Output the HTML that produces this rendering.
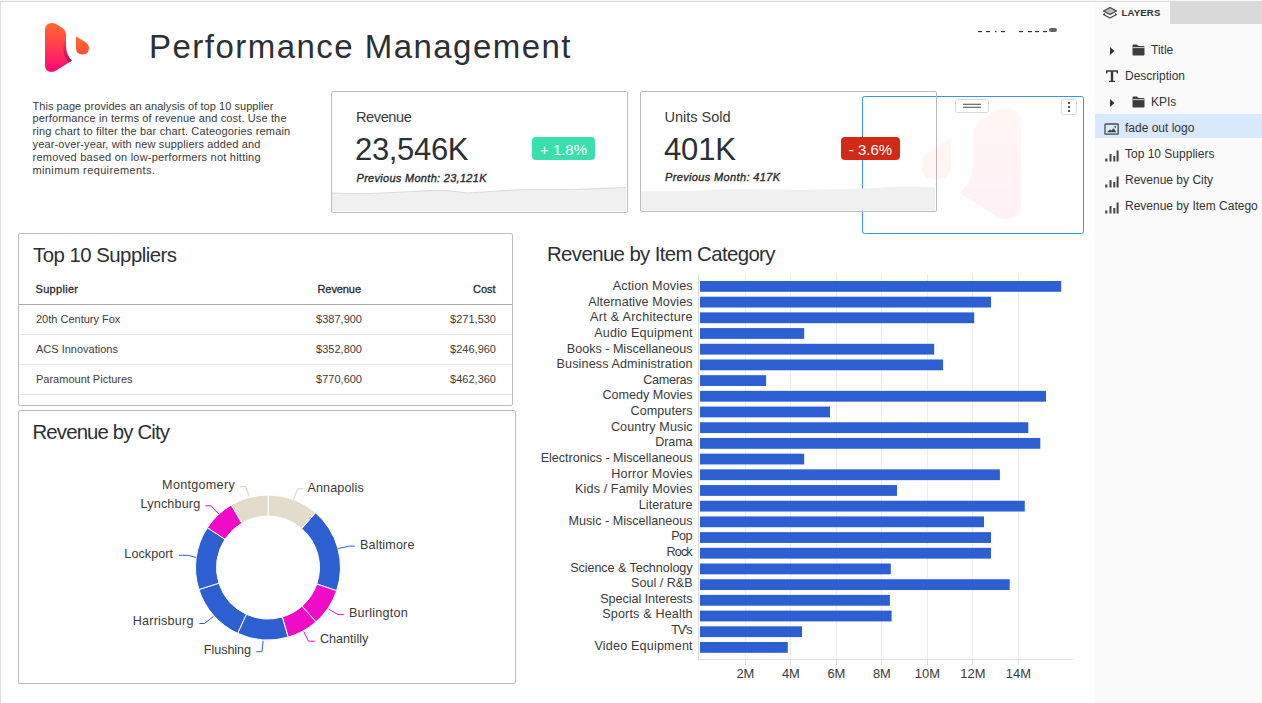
<!DOCTYPE html>
<html>
<head>
<meta charset="utf-8">
<style>
html,body{margin:0;padding:0;}
body{width:1262px;height:703px;overflow:hidden;background:#fff;position:relative;font-family:"Liberation Sans",sans-serif;color:#333;}
#topline{position:absolute;left:0;top:0;width:1262px;height:1px;background:#f7f7f7;}
#topline2{position:absolute;left:0;top:1px;width:1262px;height:1px;background:#dadada;}
#leftline{position:absolute;left:0;top:1px;width:1px;height:702px;background:#dedede;}
.card{position:absolute;box-sizing:border-box;border:1px solid #bdbdbd;border-radius:2px;}
#panel{position:absolute;left:1095px;top:2px;width:167px;height:701px;background:#fafafa;overflow:hidden;}
#tabgray{position:absolute;left:75px;top:0;width:92px;height:22px;background:#dadada;}
#tabtop{position:absolute;left:75px;top:-1px;width:92px;height:1px;background:#c6c6c6;}
#tabtxt{position:absolute;left:26.5px;top:4.8px;font-size:9.6px;font-weight:bold;color:#333;letter-spacing:0.15px;}
.row{position:absolute;left:0;width:167px;height:24px;}
#panelbg{position:absolute;left:1095px;top:2px;width:167px;height:701px;background:#fafafa;}
.row .t{position:absolute;left:30px;top:5px;font-size:12px;color:#333;white-space:nowrap;}
.row .t.clip{width:133px;overflow:hidden;}
.row.sel{background:#d8e8fd;}
svg{position:absolute;left:0;top:0;overflow:visible;}
</style>
</head>
<body>
<div id="topline"></div><div id="topline2"></div><div id="leftline"></div>

<svg width="1095" height="703" style="position:absolute;left:0;top:0;"><rect x="862.5" y="96.5" width="221" height="137" rx="2" fill="none" stroke="#3b93ec" stroke-width="1"/></svg>
<!-- KPI cards -->
<div class="card" style="left:331px;top:91px;width:297px;height:122px;"></div>
<div class="card" style="left:640px;top:91px;width:297px;height:121px;"></div>
<!-- table card -->
<div class="card" style="left:18px;top:233px;width:495px;height:173px;"></div>
<!-- city card -->
<div class="card" style="left:18px;top:410px;width:498px;height:274px;"></div>

<svg width="1095" height="703" viewBox="0 0 1095 703" style="font-family:'Liberation Sans',sans-serif;">
  <defs>
    <linearGradient id="lg1" x1="0" y1="0" x2="0" y2="1">
      <stop offset="0" stop-color="#ff6b2c"/>
      <stop offset="1" stop-color="#ff0679"/>
    </linearGradient>
    <linearGradient id="lg3" x1="0" y1="0" x2="0" y2="1">
      <stop offset="0" stop-color="#b3154e" stop-opacity="0"/>
      <stop offset="0.5" stop-color="#b3154e" stop-opacity="0.55"/>
      <stop offset="1" stop-color="#a8124a" stop-opacity="0.85"/>
    </linearGradient>
    <linearGradient id="lg2" x1="0" y1="0" x2="0" y2="1">
      <stop offset="0" stop-color="#ff6a2c"/>
      <stop offset="1" stop-color="#ff4d3e"/>
    </linearGradient>
  </defs>
  <!-- logo -->
  <g id="logo">
    <path d="M45,30 Q45,23 52,23 Q54.5,23 57,24.5 L62.5,28 Q66,30.5 66,35 L66,46 Q66,55.5 72,60.5 L57,70 Q54,72 51.5,72 Q45,72 45,65 Z" fill="url(#lg1)"/>
    <path d="M66,38 L66,46 Q66,55.5 72,60.5 L69,62.4 Q63.6,57.5 63.4,49 Q63.4,43 66,38 Z" fill="url(#lg3)"/>
    <path d="M76,36.5 L84.5,41.5 Q89,44.2 89,48 Q89,54.5 82.5,54.5 Q76,54.5 76,48 Z" fill="url(#lg2)"/>
  </g>
  <!-- title -->
  <text x="149" y="58" font-size="33" fill="#2c2f34" textLength="421.5" lengthAdjust="spacing">Performance Management</text>
  <!-- clipped date text remnants -->
  <g fill="#333">
    <rect x="978" y="31" width="4" height="1.2"/><rect x="986" y="31" width="4" height="1.2"/><rect x="995" y="31" width="1.5" height="1.2"/><rect x="1001" y="31" width="4" height="1.2"/>
    <rect x="1019" y="31" width="4" height="1.2"/><rect x="1028" y="31" width="4" height="1.2"/><rect x="1035" y="31" width="4" height="1.2"/><rect x="1043" y="31" width="4" height="1.2"/>
    <rect x="1049" y="28" width="8" height="4" rx="2" fill="#666"/>
  </g>
  <!-- description -->
  <g font-size="11" fill="#3a3a3a" lengthAdjust="spacing">
    <text x="32.5" y="109.5" textLength="240.8">This page provides an analysis of top 10 supplier</text>
    <text x="32.5" y="122.3" textLength="254">performance in terms of revenue and cost. Use the</text>
    <text x="32.5" y="135.1" textLength="257.7">ring chart to filter the bar chart. Cateogories remain</text>
    <text x="32.5" y="147.9" textLength="227.9">year-over-year, with new suppliers added and</text>
    <text x="32.5" y="160.7" textLength="228.1">removed based on low-performers not hitting</text>
    <text x="32.5" y="173.5" textLength="122.3">minimum requirements.</text>
  </g>

  <!-- KPI revenue -->
  <text x="356" y="122" font-size="14.6" fill="#383838" textLength="55.8">Revenue</text>
  <text x="355" y="160" font-size="31" fill="#2c2f34" textLength="113.5">23,546K</text>
  <rect x="532" y="137" width="63" height="23" rx="4" fill="#3adfae"/>
  <text x="540" y="155" font-size="15" fill="#fff" textLength="47">+ 1.8%</text>
  <text x="356.5" y="182" font-size="11" font-style="italic" fill="#2a2a2a" stroke="#2a2a2a" stroke-width="0.35" textLength="130">Previous Month: 23,121K</text>
  <path d="M332,193 C345,193.5 355,193.8 366,193.6 C390,193 410,191.5 435,190.3 C445,190 455,191.5 467,193 C480,192.5 500,190.5 520,189.8 C540,189.4 560,189.6 575,189.4 C595,188.8 610,188 626,187.6 L626,211 L332,211 Z" fill="#f0f0f0"/>
  <path d="M332,193 C345,193.5 355,193.8 366,193.6 C390,193 410,191.5 435,190.3 C445,190 455,191.5 467,193 C480,192.5 500,190.5 520,189.8 C540,189.4 560,189.6 575,189.4 C595,188.8 610,188 626,187.6" fill="none" stroke="#dadada" stroke-width="1"/>

  <!-- KPI units -->
  <text x="664.5" y="122" font-size="14.6" fill="#383838" textLength="66">Units Sold</text>
  <text x="664" y="160" font-size="31" fill="#2c2f34" textLength="72">401K</text>
  <rect x="841" y="137" width="59" height="23" rx="4" fill="#d02a17"/>
  <text x="870.5" y="155" font-size="15" fill="#fff" text-anchor="middle">- 3.6%</text>
  <text x="665" y="181" font-size="11" font-style="italic" fill="#2a2a2a" stroke="#2a2a2a" stroke-width="0.35" textLength="115">Previous Month: 417K</text>
  <path d="M641,191.4 C660,191.3 680,191 697,190.7 C710,190 720,189.3 733,189 C760,189.5 785,190 804,190 C830,189.5 850,189 864,188.6 C880,187.8 890,187 899.5,186.8 C915,186.8 925,187 935,187.1 L935,210.5 L641,210.5 Z" fill="#f0f0f0"/>


  <!-- Table -->
  <text x="33" y="262" font-size="20.4" fill="#2c2f34" textLength="144">Top 10 Suppliers</text>
  <g font-size="11" fill="#2a2a2a" stroke="#2a2a2a" stroke-width="0.3">
    <text x="35.5" y="293" textLength="42.5">Supplier</text>
    <text x="317.5" y="293" textLength="43.5">Revenue</text>
    <text x="473" y="293" textLength="22.5">Cost</text>
  </g>
  <rect x="19" y="304" width="493" height="1" fill="#aaaaaa"/>
  <g font-size="11" fill="#3c3c3c">
    <text x="36" y="322.5">20th Century Fox</text>
    <text x="362" y="322.5" text-anchor="end">$387,900</text>
    <text x="496" y="322.5" text-anchor="end">$271,530</text>
    <text x="36" y="352.5">ACS Innovations</text>
    <text x="362" y="352.5" text-anchor="end">$352,800</text>
    <text x="496" y="352.5" text-anchor="end">$246,960</text>
    <text x="36" y="382.5">Paramount Pictures</text>
    <text x="362" y="382.5" text-anchor="end">$770,600</text>
    <text x="496" y="382.5" text-anchor="end">$462,360</text>
  </g>
  <rect x="20" y="334" width="492" height="1" fill="#e6e6e6"/>
  <rect x="20" y="364" width="492" height="1" fill="#e6e6e6"/>
  <rect x="20" y="394" width="492" height="1" fill="#e6e6e6"/>

  <!-- City -->
  <text x="32.5" y="439" font-size="20.4" fill="#2c2f34" textLength="137.5">Revenue by City</text>
  <g id="donut" stroke="#fff" stroke-width="1">
<path d="M268.00,495.00 A72.5,72.5 0 0 1 315.56,512.78 L301.79,528.63 A51.5,51.5 0 0 0 268.00,516.00 Z" fill="#e3dccc"/>
<path d="M315.56,512.78 A72.5,72.5 0 0 1 336.67,590.74 L316.78,584.01 A51.5,51.5 0 0 0 301.79,528.63 Z" fill="#2d5fd2"/>
<path d="M336.67,590.74 A72.5,72.5 0 0 1 315.95,621.88 L302.06,606.13 A51.5,51.5 0 0 0 316.78,584.01 Z" fill="#ef0bc8"/>
<path d="M315.95,621.88 A72.5,72.5 0 0 1 288.11,637.16 L282.28,616.98 A51.5,51.5 0 0 0 302.06,606.13 Z" fill="#ef0bc8"/>
<path d="M288.11,637.16 A72.5,72.5 0 0 1 237.59,633.31 L246.40,614.25 A51.5,51.5 0 0 0 282.28,616.98 Z" fill="#2d5fd2"/>
<path d="M237.59,633.31 A72.5,72.5 0 0 1 198.93,589.54 L218.94,583.16 A51.5,51.5 0 0 0 246.40,614.25 Z" fill="#2d5fd2"/>
<path d="M198.93,589.54 A72.5,72.5 0 0 1 207.40,527.70 L224.96,539.23 A51.5,51.5 0 0 0 218.94,583.16 Z" fill="#2d5fd2"/>
<path d="M207.40,527.70 A72.5,72.5 0 0 1 231.31,504.97 L241.94,523.08 A51.5,51.5 0 0 0 224.96,539.23 Z" fill="#ef0bc8"/>
<path d="M231.31,504.97 A72.5,72.5 0 0 1 268.00,495.00 L268.00,516.00 A51.5,51.5 0 0 0 241.94,523.08 Z" fill="#e3dccc"/>
</g>
  <g fill="none" stroke-width="1">
    <polyline points="240.2,486.4 245.2,486.4 249.4,496.3" stroke="#d6cfbd"/>
    <polyline points="205.3,505.8 211,505.8 218.9,514.1" stroke="#ef0bc8"/>
    <polyline points="179,555.3 188.3,555.3 196.1,557.5" stroke="#2d5fd2"/>
    <polyline points="303.4,488.8 297.7,488.8 293.5,499.2" stroke="#d6cfbd"/>
    <polyline points="354.9,546.1 349.7,546.1 338.3,548.5" stroke="#2d5fd2"/>
    <polyline points="199.4,623.5 204.5,623.5 213.4,616.5" stroke="#2d5fd2"/>
    <polyline points="256.3,651.7 262,651.7 263.1,640.8" stroke="#2d5fd2"/>
    <polyline points="343.9,614.6 337.8,614.6 328.9,609.2" stroke="#ef0bc8"/>
    <polyline points="314.8,641.2 308.4,641.2 303.9,631.8" stroke="#ef0bc8"/>
  </g>
  <g font-size="12.6" fill="#3a3a3a">
    <text x="162.1" y="488.9" textLength="72.6">Montgomery</text>
    <text x="140.6" y="508.2" textLength="59.6">Lynchburg</text>
    <text x="124.3" y="557.5" textLength="48.8">Lockport</text>
    <text x="307.4" y="491.6" textLength="56.3">Annapolis</text>
    <text x="359.9" y="548.5" textLength="54.6">Baltimore</text>
    <text x="132.7" y="625.4" textLength="60.8">Harrisburg</text>
    <text x="203.8" y="653.6" textLength="47.3">Flushing</text>
    <text x="348.9" y="616.9" textLength="58.8">Burlington</text>
    <text x="319.9" y="643.4" textLength="48.5">Chantilly</text>
  </g>

  <!-- Bar chart -->
  <text x="547" y="261" font-size="20.4" fill="#2c2f34" textLength="228.5">Revenue by Item Category</text>
  <g id="bars">
<line x1="745.5" y1="274" x2="745.5" y2="659" stroke="#eeeeee" stroke-width="1"/>
<line x1="790.5" y1="274" x2="790.5" y2="659" stroke="#eeeeee" stroke-width="1"/>
<line x1="836.5" y1="274" x2="836.5" y2="659" stroke="#eeeeee" stroke-width="1"/>
<line x1="881.5" y1="274" x2="881.5" y2="659" stroke="#eeeeee" stroke-width="1"/>
<line x1="927.5" y1="274" x2="927.5" y2="659" stroke="#eeeeee" stroke-width="1"/>
<line x1="972.5" y1="274" x2="972.5" y2="659" stroke="#eeeeee" stroke-width="1"/>
<line x1="1018.5" y1="274" x2="1018.5" y2="659" stroke="#eeeeee" stroke-width="1"/>
<line x1="698.5" y1="274" x2="698.5" y2="659.5" stroke="#dddddd" stroke-width="1"/>
<line x1="698" y1="659.5" x2="1073" y2="659.5" stroke="#dddddd" stroke-width="1"/>
<line x1="745.5" y1="659" x2="745.5" y2="665" stroke="#dddddd" stroke-width="1"/>
<line x1="790.5" y1="659" x2="790.5" y2="665" stroke="#dddddd" stroke-width="1"/>
<line x1="836.5" y1="659" x2="836.5" y2="665" stroke="#dddddd" stroke-width="1"/>
<line x1="881.5" y1="659" x2="881.5" y2="665" stroke="#dddddd" stroke-width="1"/>
<line x1="927.5" y1="659" x2="927.5" y2="665" stroke="#dddddd" stroke-width="1"/>
<line x1="972.5" y1="659" x2="972.5" y2="665" stroke="#dddddd" stroke-width="1"/>
<line x1="1018.5" y1="659" x2="1018.5" y2="665" stroke="#dddddd" stroke-width="1"/>
<rect x="700" y="281.00" width="361.2" height="10.8" fill="#2d5fd2"/>
<rect x="700" y="296.70" width="291.0" height="10.8" fill="#2d5fd2"/>
<rect x="700" y="312.39" width="274.2" height="10.8" fill="#2d5fd2"/>
<rect x="700" y="328.09" width="104.2" height="10.8" fill="#2d5fd2"/>
<rect x="700" y="343.78" width="234.2" height="10.8" fill="#2d5fd2"/>
<rect x="700" y="359.48" width="243.1" height="10.8" fill="#2d5fd2"/>
<rect x="700" y="375.18" width="66.1" height="10.8" fill="#2d5fd2"/>
<rect x="700" y="390.87" width="346.0" height="10.8" fill="#2d5fd2"/>
<rect x="700" y="406.57" width="130.0" height="10.8" fill="#2d5fd2"/>
<rect x="700" y="422.26" width="328.3" height="10.8" fill="#2d5fd2"/>
<rect x="700" y="437.96" width="340.3" height="10.8" fill="#2d5fd2"/>
<rect x="700" y="453.66" width="104.2" height="10.8" fill="#2d5fd2"/>
<rect x="700" y="469.35" width="299.9" height="10.8" fill="#2d5fd2"/>
<rect x="700" y="485.05" width="197.0" height="10.8" fill="#2d5fd2"/>
<rect x="700" y="500.74" width="324.8" height="10.8" fill="#2d5fd2"/>
<rect x="700" y="516.44" width="284.0" height="10.8" fill="#2d5fd2"/>
<rect x="700" y="532.14" width="291.0" height="10.8" fill="#2d5fd2"/>
<rect x="700" y="547.83" width="291.0" height="10.8" fill="#2d5fd2"/>
<rect x="700" y="563.53" width="190.8" height="10.8" fill="#2d5fd2"/>
<rect x="700" y="579.22" width="309.7" height="10.8" fill="#2d5fd2"/>
<rect x="700" y="594.92" width="189.9" height="10.8" fill="#2d5fd2"/>
<rect x="700" y="610.62" width="191.6" height="10.8" fill="#2d5fd2"/>
<rect x="700" y="626.31" width="102.0" height="10.8" fill="#2d5fd2"/>
<rect x="700" y="642.01" width="87.8" height="10.8" fill="#2d5fd2"/>
<g font-size="12.6" fill="#3a3a3a">
<text x="612.70" y="290.00" textLength="79.90">Action Movies</text>
<text x="588.20" y="305.64" textLength="104.40">Alternative Movies</text>
<text x="590.10" y="321.28" textLength="102.50">Art &amp; Architecture</text>
<text x="594.20" y="336.92" textLength="98.40">Audio Equipment</text>
<text x="566.80" y="352.56" textLength="125.80">Books - Miscellaneous</text>
<text x="556.60" y="368.20" textLength="136.00">Business Administration</text>
<text x="643.30" y="383.84" textLength="49.30">Cameras</text>
<text x="602.40" y="399.48" textLength="90.20">Comedy Movies</text>
<text x="630.50" y="415.12" textLength="62.10">Computers</text>
<text x="610.90" y="430.76" textLength="81.70">Country Music</text>
<text x="655.20" y="446.40" textLength="37.40">Drama</text>
<text x="540.70" y="462.04" textLength="151.90">Electronics - Miscellaneous</text>
<text x="611.20" y="477.68" textLength="81.40">Horror Movies</text>
<text x="575.10" y="493.32" textLength="117.50">Kids / Family Movies</text>
<text x="638.70" y="508.96" textLength="53.90">Literature</text>
<text x="568.50" y="524.60" textLength="124.10">Music - Miscellaneous</text>
<text x="671.20" y="540.24" textLength="21.40">Pop</text>
<text x="666.60" y="555.88" textLength="26.00">Rock</text>
<text x="570.20" y="571.52" textLength="122.40">Science &amp; Technology</text>
<text x="631.00" y="587.16" textLength="61.60">Soul / R&amp;B</text>
<text x="600.20" y="602.80" textLength="92.40">Special Interests</text>
<text x="602.20" y="618.44" textLength="90.40">Sports &amp; Health</text>
<text x="671.20" y="634.08" textLength="21.40">TV's</text>
<text x="594.50" y="649.72" textLength="98.10">Video Equipment</text>
</g>
<g font-size="12.9" fill="#3a3a3a" text-anchor="middle">
<text x="745.4" y="678">2M</text>
<text x="790.9" y="678">4M</text>
<text x="836.4" y="678">6M</text>
<text x="881.9" y="678">8M</text>
<text x="927.4" y="678">10M</text>
<text x="972.9" y="678">12M</text>
<text x="1018.4" y="678">14M</text>
</g></g>

  <!-- selection box -->
  <rect x="955.5" y="99.5" width="33" height="13" rx="2" fill="#fff" stroke="#d8d8d8" stroke-width="1"/>
  <rect x="963" y="103.7" width="18" height="1.2" fill="#666"/>
  <rect x="963" y="106.7" width="18" height="1.2" fill="#666"/>
  <rect x="1061.5" y="99.5" width="15" height="15" rx="2" fill="#fff" stroke="#d8d8d8" stroke-width="1"/>
  <rect x="1068" y="102" width="2" height="2" fill="#555"/>
  <rect x="1068" y="106" width="2" height="2" fill="#555"/>
  <rect x="1068" y="110" width="2" height="2" fill="#555"/>

  <!-- faded logo -->
  <g opacity="0.05" transform="matrix(-2.265,0,0,2.265,1122.9,55.9)">
    <path d="M45,30 Q45,23 52,23 Q54.5,23 57,24.5 L62.5,28 Q66,30.5 66,35 L66,46 Q66,55.5 72,60.5 L57,70 Q54,72 51.5,72 Q45,72 45,65 Z" fill="url(#lg1)"/>
    <path d="M76,36.5 L84.5,41.5 Q89,44.2 89,48 Q89,54.5 82.5,54.5 Q76,54.5 76,48 Z" fill="url(#lg2)"/>
  </g>
</svg>

<!-- right panel -->
<div id="panelbg"></div>
<div id="panel">
  <div id="tabgray"></div><div id="tabtop"></div>
  <svg width="16" height="14" style="left:7px;top:4px;" viewBox="0 0 16 14">
    <path d="M8,1.5 L14.5,5 L8,8.5 L1.5,5 Z" fill="#bdbdbd" stroke="#444" stroke-width="1.2" stroke-linejoin="round"/>
    <path d="M3,7.5 L1.5,8.5 L8,12 L14.5,8.5 L13,7.5" fill="none" stroke="#444" stroke-width="1.2" stroke-linejoin="round"/>
  </svg>
  <div id="tabtxt">LAYERS</div>

  <div class="row" style="top:36px;">
    <svg width="8" height="10" style="left:14px;top:8px;" viewBox="0 0 8 10"><path d="M1,1 L5.5,5 L1,9 Z" fill="#333"/></svg>
    <svg width="14" height="12" style="left:37px;top:6px;" viewBox="0 0 14 12"><path d="M0.5,1.5 Q0.5,0.5 1.5,0.5 L5,0.5 L6.5,2 L11.5,2 Q12.5,2 12.5,3 L12.5,10.5 Q12.5,11.5 11.5,11.5 L1.5,11.5 Q0.5,11.5 0.5,10.5 Z" fill="#3c3c3c"/><path d="M0.5,3.6 L12.5,3.6" stroke="#fafafa" stroke-width="0.8"/></svg>
    <div class="t" style="left:56px;">Title</div>
  </div>
  <div class="row" style="top:62px;">
    <svg width="14" height="14" style="left:10px;top:5px;" viewBox="0 0 14 14"><path d="M1,1.2 L13,1.2 L13,4.4 L11.8,4.4 L11.3,2.8 L8.2,2.8 L8.2,11.4 L10,11.9 L10,13 L4,13 L4,11.9 L5.8,11.4 L5.8,2.8 L2.7,2.8 L2.2,4.4 L1,4.4 Z" fill="#3a3a3a"/></svg>
    <div class="t">Description</div>
  </div>
  <div class="row" style="top:88px;">
    <svg width="8" height="10" style="left:14px;top:8px;" viewBox="0 0 8 10"><path d="M1,1 L5.5,5 L1,9 Z" fill="#333"/></svg>
    <svg width="14" height="12" style="left:37px;top:6px;" viewBox="0 0 14 12"><path d="M0.5,1.5 Q0.5,0.5 1.5,0.5 L5,0.5 L6.5,2 L11.5,2 Q12.5,2 12.5,3 L12.5,10.5 Q12.5,11.5 11.5,11.5 L1.5,11.5 Q0.5,11.5 0.5,10.5 Z" fill="#3c3c3c"/><path d="M0.5,3.6 L12.5,3.6" stroke="#fafafa" stroke-width="0.8"/></svg>
    <div class="t" style="left:56px;">KPIs</div>
  </div>
  <div class="row sel" style="top:112px;">
    <svg width="16" height="13" style="left:9px;top:8.5px;" viewBox="0 0 16 13"><rect x="1" y="1" width="13.2" height="10.2" rx="0.6" fill="none" stroke="#4a4a4a" stroke-width="1.3"/><path d="M3,9.2 L6,6.4 L7.4,7.6 L9.6,5.2 L12.4,9.2 Z" fill="#444"/><circle cx="11.2" cy="3.8" r="0.9" fill="#444"/></svg>
    <div class="t" style="top:7px;">fade out logo</div>
  </div>
  <div class="row" style="top:140px;">
    <svg width="16" height="13" style="left:9px;top:8px;" viewBox="0 0 16 13"><rect x="1.2" y="8.5" width="2.2" height="3" fill="#444"/><rect x="5.5" y="4" width="2" height="7.5" fill="#444"/><rect x="9.3" y="6" width="2" height="5.5" fill="#444"/><rect x="12.6" y="0.5" width="2" height="11" fill="#444"/></svg>
    <div class="t">Top 10 Suppliers</div>
  </div>
  <div class="row" style="top:166px;">
    <svg width="16" height="13" style="left:9px;top:8px;" viewBox="0 0 16 13"><rect x="1.2" y="8.5" width="2.2" height="3" fill="#444"/><rect x="5.5" y="4" width="2" height="7.5" fill="#444"/><rect x="9.3" y="6" width="2" height="5.5" fill="#444"/><rect x="12.6" y="0.5" width="2" height="11" fill="#444"/></svg>
    <div class="t">Revenue by City</div>
  </div>
  <div class="row" style="top:192px;">
    <svg width="16" height="13" style="left:9px;top:8px;" viewBox="0 0 16 13"><rect x="1.2" y="8.5" width="2.2" height="3" fill="#444"/><rect x="5.5" y="4" width="2" height="7.5" fill="#444"/><rect x="9.3" y="6" width="2" height="5.5" fill="#444"/><rect x="12.6" y="0.5" width="2" height="11" fill="#444"/></svg>
    <div class="t clip">Revenue by Item Category</div>
  </div>
</div>
</body>
</html>
